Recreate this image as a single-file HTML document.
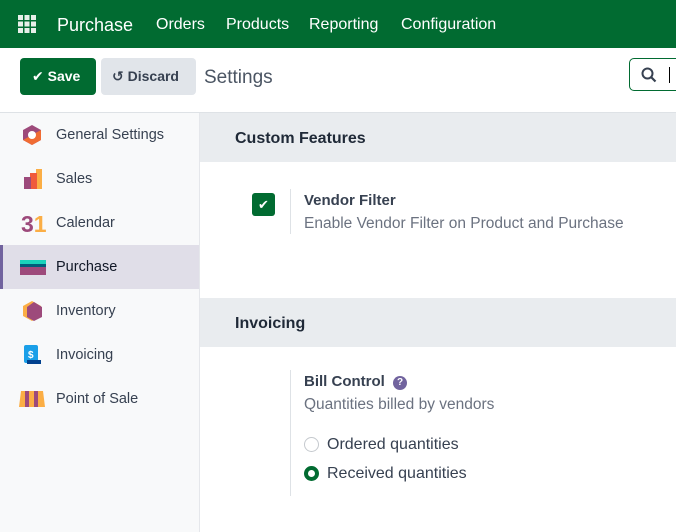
<!DOCTYPE html>
<html><head><meta charset="utf-8"><style>
*{box-sizing:border-box;margin:0;padding:0}
body{width:676px;height:532px;overflow:hidden;font-family:"Liberation Sans","DejaVu Sans",sans-serif;background:#fff;position:relative;color:#374151}
.nav{position:absolute;left:0;top:0;width:676px;height:48px;background:#016b31;color:#fff}
.nav .t{position:absolute;top:1px;line-height:48px;font-size:16px}
.cp{position:absolute;top:48px;left:0;width:676px;height:65px;border-bottom:1px solid #dee2e6;background:#fff}
.btn{position:absolute;top:10px;height:37px;border-radius:4px;font-weight:bold;font-size:14px;line-height:37px}
.side{position:absolute;left:0;top:113px;width:200px;height:419px;background:#f8f9fa;border-right:1px solid #e5e7eb}
.it{position:absolute;left:0;width:199px;height:44px;line-height:44px;font-size:14.5px;padding-left:56px;color:#374151}
.ic{position:absolute;left:21px;top:12px;width:22px;height:20px}
.band{position:absolute;left:200px;width:476px;height:49px;background:#e9ecef;font-weight:bold;font-size:16px;line-height:52px;padding-left:35px;color:#1f2937}
.vl{position:absolute;left:290px;width:1px;background:#dee2e6}
.tx{position:absolute;font-size:15.5px}
</style></head><body>
<div class="nav">
<svg style="position:absolute;left:18px;top:15px" width="18" height="18" viewBox="0 0 18 18" fill="#e7efe9"><rect x="0" y="0" width="5" height="5"/><rect x="6.5" y="0" width="5" height="5"/><rect x="13" y="0" width="5" height="5"/><rect x="0" y="6.5" width="5" height="5"/><rect x="6.5" y="6.5" width="5" height="5"/><rect x="13" y="6.5" width="5" height="5"/><rect x="0" y="13" width="5" height="5"/><rect x="6.5" y="13" width="5" height="5"/><rect x="13" y="13" width="5" height="5"/></svg>
<span class="t" style="left:57px;font-size:18px">Purchase</span>
<span class="t" style="left:156px">Orders</span>
<span class="t" style="left:226px">Products</span>
<span class="t" style="left:309px">Reporting</span>
<span class="t" style="left:401px">Configuration</span>
</div>
<div class="cp">
<div class="btn" style="left:20px;width:76px;background:#016b31;color:#fff;padding-left:12px">✔ Save</div>
<div class="btn" style="left:101px;width:95px;background:#e1e5ea;color:#374151;padding-left:11px">↺ Discard</div>
<div style="position:absolute;left:204px;top:11px;line-height:37px;font-size:19px;color:#4b5563">Settings</div>
<div style="position:absolute;left:629px;top:10px;width:60px;height:33px;border:1px solid #016b31;border-radius:5px">
<svg style="position:absolute;left:11px;top:8px" width="16" height="16" viewBox="0 0 16 16"><circle cx="6.5" cy="6.5" r="5" fill="none" stroke="#374151" stroke-width="2"/><path d="M10 10l4.5 4.5" stroke="#374151" stroke-width="2.2"/></svg>
<div style="position:absolute;left:39px;top:8px;width:1px;height:16px;background:#000"></div></div>
</div>
<div class="side">
<div class="it" style="top:0"><svg class="ic" viewBox="0 0 22 20"><polygon points="11,0 20,5 20,15 11,20 2,15 2,5" fill="#9d4a7b"/><polygon points="20,5 20,15 11,20 2,15" fill="#f06c33"/><circle cx="11" cy="10" r="4" fill="#fff"/></svg>General Settings</div>
<div class="it" style="top:44px"><svg class="ic" viewBox="0 0 22 20"><rect x="15" y="0" width="6" height="20" fill="#fbae45"/><rect x="9" y="4" width="7" height="16" fill="#f05a3c"/><rect x="3" y="8" width="7" height="12" fill="#9d4a7b"/></svg>Sales</div>
<div class="it" style="top:88px"><span style="position:absolute;left:21px;top:1px;font-weight:bold;font-size:23px;color:#9d4a7b">3<span style="color:#fbae45">1</span></span>Calendar</div>
<div class="it" style="top:132px;background:#e0dee8;border-left:3px solid #71639e;color:#111827;padding-left:53px"><svg class="ic" style="left:17px;top:15px;height:15px;width:26px" viewBox="0 0 26 15"><rect width="26" height="4" fill="#1ad3bb"/><rect y="4" width="26" height="3" fill="#005e7a"/><rect y="7" width="26" height="8" fill="#9d4a7b"/></svg>Purchase</div>
<div class="it" style="top:176px"><svg class="ic" viewBox="0 0 22 20"><polygon points="11,0 20,5 20,15 11,20 2,15 2,5" fill="#fbae45"/><polygon points="13,1 21,6 21,16 13,20 6,16 6,6" fill="#9d4a7b"/></svg>Inventory</div>
<div class="it" style="top:220px"><svg class="ic" viewBox="0 0 22 20"><rect x="3" y="0" width="14" height="18" rx="2" fill="#1a9fe8"/><rect x="6" y="15" width="14" height="4" fill="#01418e"/><text x="7" y="13" font-size="10" font-weight="bold" fill="#fff" font-family="Liberation Sans">$</text></svg>Invoicing</div>
<div class="it" style="top:264px"><svg class="ic" viewBox="0 0 26 20" style="width:26px;left:19px"><path d="M2 2h22l2 16H0z" fill="#fbae45"/><rect x="6" y="2" width="4" height="16" fill="#9d4a7b"/><rect x="15" y="2" width="4" height="16" fill="#9d4a7b"/></svg>Point of Sale</div>
</div>
<div class="band" style="top:113px">Custom Features</div>
<div style="position:absolute;left:252px;top:193px;width:23px;height:23px;background:#016b31;border-radius:3px;color:#fff;font-size:13px;text-align:center;line-height:23px;font-weight:bold">✔</div>
<div class="vl" style="top:189px;height:45px"></div>
<div class="tx" style="left:304px;top:192px;font-weight:bold;font-size:15px">Vendor Filter</div>
<div class="tx" style="left:304px;top:215px;color:#6b7280">Enable Vendor Filter on Product and Purchase</div>
<div class="band" style="top:298px">Invoicing</div>
<div class="vl" style="top:370px;height:126px"></div>
<div class="tx" style="left:304px;top:373px;font-weight:bold;font-size:15px">Bill Control <span style="display:inline-block;width:14px;height:14px;border-radius:7px;background:#71639e;color:#fff;font-size:10px;text-align:center;line-height:14px;margin-left:4px;vertical-align:1px">?</span></div>
<div class="tx" style="left:304px;top:396px;color:#6b7280">Quantities billed by vendors</div>
<div style="position:absolute;left:304px;top:437px;width:15px;height:15px;border:1px solid #c5c9ce;border-radius:50%"></div>
<div class="tx" style="left:327px;top:436px;font-size:16px">Ordered quantities</div>
<div style="position:absolute;left:304px;top:466px;width:15px;height:15px;border:4px solid #016b31;border-radius:50%"></div>
<div class="tx" style="left:327px;top:465px;font-size:16px">Received quantities</div>
</body></html>
